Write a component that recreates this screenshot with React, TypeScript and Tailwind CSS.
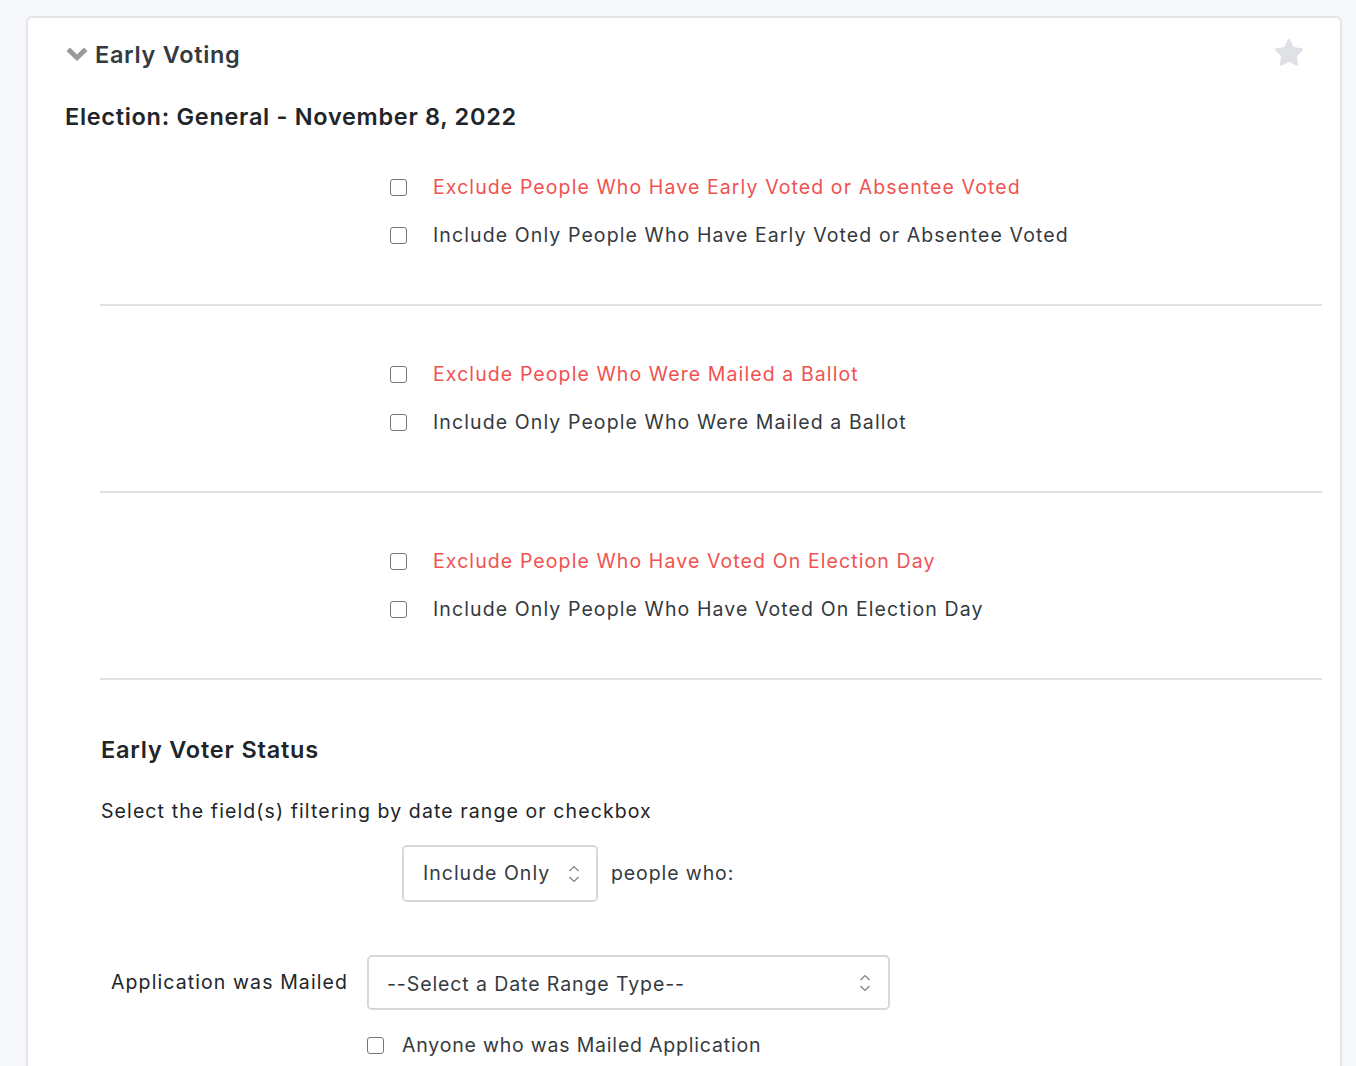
import { Star } from 'lucide-react';

const sections = [
  {
    exclude: 'Exclude People Who Have Early Voted or Absentee Voted',
    include: 'Include Only People Who Have Early Voted or Absentee Voted',
  },
  {
    exclude: 'Exclude People Who Were Mailed a Ballot',
    include: 'Include Only People Who Were Mailed a Ballot',
  },
  {
    exclude: 'Exclude People Who Have Voted On Election Day',
    include: 'Include Only People Who Have Voted On Election Day',
  },
];

function Box() {
  return <span className="block h-[17px] w-[17px] shrink-0 rounded-[3px] border border-[#767676] bg-white" />;
}

function Updown() {
  return (
    <svg width="12" height="20" viewBox="0 0 12 20" fill="none" stroke="#7a8087" strokeWidth="1.2">
      <path d="M1.5 7 6 2.5 10.5 7" />
      <path d="M1.5 13 6 17.5 10.5 13" />
    </svg>
  );
}

function CheckRow({ label, red }: { label: string; red?: boolean }) {
  return (
    <div className="flex h-[48px] items-center">
      <Box />
      <span className={`ml-[26px] text-[19.5px] tracking-[1.1px] ${red ? 'text-[#f05252]' : 'text-[#343a40]'}`}>{label}</span>
    </div>
  );
}

export default function App() {
  return (
    <div className="min-h-[1066px] bg-[#f7f8fa] pl-[26px] pr-[14px] pt-[16px] font-['Inter',sans-serif]">
      <div className="h-[1060px] rounded-t-[6px] border-2 border-b-0 border-[#e1e4e8] bg-white pl-[37px] pr-[18px]">
        <div className="flex items-start justify-between pt-[19px]">
          <div className="flex items-center">
            <svg width="24" height="16" viewBox="0 0 24 16" className="mr-[6px]">
              <path d="M1.5 4 5 0.5 12 7.5 19 0.5 22.5 4 12 14 Z" fill="#9a9a9a" />
            </svg>
            <span className="text-[23.5px] font-semibold tracking-[0.7px] text-[#343a40]">Early Voting</span>
          </div>
          <Star className="mr-[17px] mt-[0px] h-[32px] w-[32px] fill-[#dfe1e6] text-[#dfe1e6]" strokeWidth={1} />
        </div>
        <div className="mt-[27px] text-[23.5px] font-semibold tracking-[0.7px] text-[#212529]">
          Election: General - November 8, 2022
        </div>
        <div className="pl-[35px]">
          <div className="pl-[290px] pt-[29px] pb-[44px]">
            <CheckRow label={sections[0].exclude} red />
            <CheckRow label={sections[0].include} />
          </div>
          {sections.slice(1).map((s) => (
            <div key={s.exclude} className="border-t-2 border-[#dee2e6] pl-[290px] pt-[45px] pb-[44px]">
              <CheckRow label={s.exclude} red />
              <CheckRow label={s.include} />
            </div>
          ))}
          <div className="border-t-2 border-[#dee2e6] pt-[52px]">
            <div className="pl-[1px] text-[23.5px] font-semibold tracking-[0.8px] text-[#212529]">Early Voter Status</div>
            <div className="mt-[30px] pl-[1px] text-[19.5px] tracking-[1.1px] text-[#212529]">Select the field(s) filtering by date range or checkbox</div>
            <div className="mt-[19px] flex items-center pl-[302px]">
              <div className="flex h-[57px] w-[196px] items-center justify-between rounded-[5px] border-2 border-[#d5d9de] pl-[19px] pr-[16px] text-[19.5px] tracking-[1px] text-[#343a40]">
                Include Only
                <Updown />
              </div>
              <span className="ml-[13px] text-[19.5px] tracking-[0.9px] text-[#343a40]">people who:</span>
            </div>
            <div className="mt-[53px] flex items-center">
              <span className="ml-[11px] w-[256px] text-[19.5px] tracking-[1.1px] text-[#212529]">Application was Mailed</span>
              <div className="flex h-[55px] w-[523px] items-center justify-between rounded-[5px] border-2 border-[#d5d9de] pl-[18px] pr-[17px] pt-[4px] text-[19.5px] tracking-[0.9px] text-[#343a40]">
                --Select a Date Range Type--
                <span className="-mt-[4px]">
                  <Updown />
                </span>
              </div>
            </div>
            <div className="mt-[21px] flex items-center pl-[267px]">
              <Box />
              <span className="ml-[18px] text-[19.5px] tracking-[0.8px] text-[#343a40]">Anyone who was Mailed Application</span>
            </div>
          </div>
        </div>
      </div>
    </div>
  );
}
